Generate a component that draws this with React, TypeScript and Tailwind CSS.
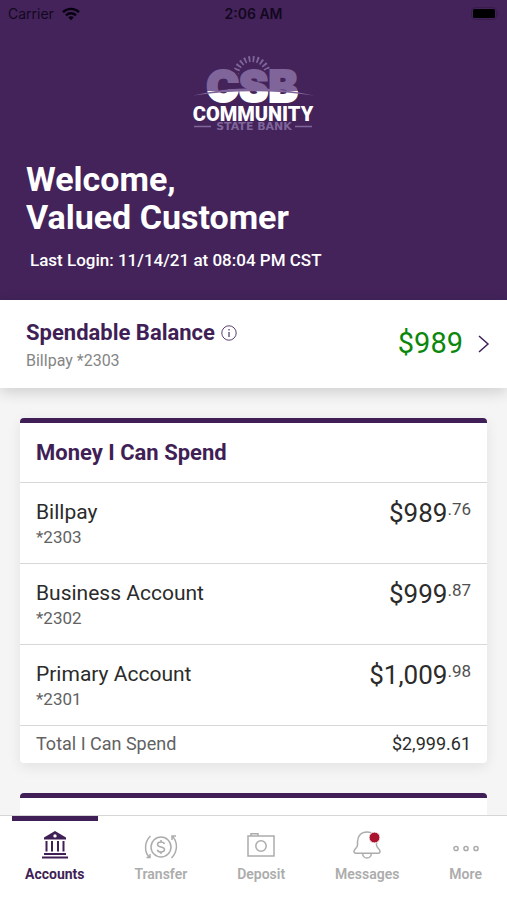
import type { ReactNode } from "react";

const accounts = [
  { name: "Billpay", number: "*2303", dollars: "$989", cents: ".76" },
  { name: "Business Account", number: "*2302", dollars: "$999", cents: ".87" },
  { name: "Primary Account", number: "*2301", dollars: "$1,009", cents: ".98" },
];

function StatusBar() {
  return (
    <div className="grid grid-cols-3 items-center h-7 px-2 font-[Inter,sans-serif] text-sm text-[#130820]">
      <div className="flex items-center gap-2">
        <span>Carrier</span>
        <svg width="18" height="14" viewBox="0 0 18 14" fill="none" stroke="#080010" strokeWidth="2.4">
          <path d="M1 5.2C5.5 .7 12.5 .7 17 5.2" />
          <path d="M4 8.3C6.8 5.6 11.2 5.6 14 8.3" />
          <path d="M9 13.2L6.2 10.3C7.8 8.9 10.2 8.9 11.8 10.3Z" fill="#080010" stroke="none" />
        </svg>
      </div>
      <span className="text-center font-semibold">2:06 AM</span>
      <svg className="justify-self-end" width="28" height="14" viewBox="0 0 28 14">
        <rect x=".5" y=".5" width="25" height="12" rx="3.5" fill="none" stroke="#391c4d" />
        <rect x="2" y="2" width="22" height="9" rx="1.5" fill="#000" />
        <path d="M26.5 5v4c1.5-.6 1.5-3.4 0-4Z" fill="#391c4d" />
      </svg>
    </div>
  );
}

function Logo() {
  return (
    <svg width="124" height="80" viewBox="0 0 124 80" role="img" aria-label="CSB Community State Bank">
      <defs>
        <linearGradient id="csb" gradientUnits="userSpaceOnUse" x1="0" y1="0" x2="0" y2="80">
          <stop offset=".49" stopColor="#80659a" />
          <stop offset=".49" stopColor="#fff" />
        </linearGradient>
        <clipPath id="sky">
          <path d="M30 0H90V17H75L70 24H48L43 17H30Z" />
        </clipPath>
      </defs>
      {/* sunburst */}
      <circle cx="60" cy="23" r="16" fill="none" stroke="#80659a" strokeWidth="6" strokeDasharray="1.8 2.4" clipPath="url(#sky)" />
      <text x="60" y="50" textAnchor="middle" fontFamily="Inter, sans-serif" fontWeight="900" fontSize="44" fill="url(#csb)" stroke="url(#csb)" strokeWidth="2">
        CSB
      </text>
      {/* horizon */}
      <path d="M1 43.5Q60 29 122 43.5Q60 35 1 43.5Z" fill="#80659a" />
      <text x="61" y="69" textAnchor="middle" fontFamily="Roboto, sans-serif" fontWeight="900" fontSize="20" fill="#fff">COMMUNITY</text>
      <path d="M2 74.5H19M103 74.5H120" stroke="#80659a" strokeWidth="1.5" />
      <text x="62" y="78" textAnchor="middle" fontFamily="DejaVu Sans, sans-serif" fontWeight="700" fontSize="11" fill="#80659a">STATE BANK</text>
    </svg>
  );
}

function BankIcon() {
  return (
    <svg width="28" height="28" viewBox="0 0 28 28" fill="#3f1f56">
      <path fillRule="evenodd" d="M14 0L25 6.5V8.5H3V6.5ZM14 3.2A1.7 1.7 0 1 0 14 6.6A1.7 1.7 0 1 0 14 3.2Z" />
      <path d="M4.5 10H6.5V20.5H4.5ZM10 10H12V20.5H10ZM16 10H18V20.5H16ZM21.5 10H23.5V20.5H21.5ZM3 22H25V24H3ZM1 25.5H27V27.5H1Z" />
    </svg>
  );
}

function TransferIcon() {
  return (
    <svg width="34" height="28" viewBox="0 0 34 28" fill="none" stroke="#acacac" strokeWidth="1.5">
      <circle cx="17" cy="16" r="10" />
      <path d="M20.5 13C20 11.5 18.7 11 17 11C15 11 13.5 11.9 13.5 13.5C13.5 17 20.5 15 20.5 18.6C20.5 20.2 19 21 17 21C15 21 13.7 20.2 13.3 18.7M17 9V11M17 21V23" />
      <path d="M6.5 5C.2 11 .2 20.5 5 26M2.5 26.5H6V23" />
      <path d="M27.5 27C33.8 21 33.8 11.5 29 6M32 5H28V9" />
    </svg>
  );
}

function CameraIcon() {
  return (
    <svg width="28" height="28" viewBox="0 0 28 28" fill="none" stroke="#acacac" strokeWidth="1.5">
      <path d="M1 5H27V25H1ZM4 5V2.8H11V5" />
      <circle cx="14" cy="15" r="5.2" />
    </svg>
  );
}

function BellIcon() {
  return (
    <svg width="28" height="28" viewBox="0 0 28 28" fill="none" stroke="#acacac" strokeWidth="1.5">
      <path d="M14 1C8 1 4.5 5 4.5 10.5V14C4.5 17 1 18 1 20.5C1 21.7 2 22.2 3 22.2H25C26 22.2 27 21.7 27 20.5C27 18 23.5 17 23.5 14V10.5C23.5 5 20 1 14 1Z" />
      <path d="M9.5 22.5C10 25.5 11.5 27 14 27C16.5 27 18 25.5 18.5 22.5" />
      <circle cx="21.5" cy="6.5" r="5.5" fill="#a9132e" stroke="#fff" strokeWidth="1" />
    </svg>
  );
}

function MoreIcon() {
  return (
    <svg width="28" height="28" viewBox="0 0 28 28" fill="none" stroke="#acacac" strokeWidth="1.5">
      <circle cx="4" cy="17.5" r="2.1" />
      <circle cx="14" cy="17.5" r="2.1" />
      <circle cx="24" cy="17.5" r="2.1" />
    </svg>
  );
}

function NavItem({ label, icon, active = false }: { label: string; icon: ReactNode; active?: boolean }) {
  return (
    <a
      href="#"
      aria-current={active ? "page" : undefined}
      className={
        active
          ? "flex flex-col items-center gap-[5px] border-t-5 border-[#3f1f56] px-[13px] pt-2.5 text-sm font-bold text-[#3f1f56]"
          : "flex flex-col items-center gap-[5px] border-t-5 border-transparent px-[13px] pt-2.5 text-sm font-semibold text-[#acacac]"
      }
    >
      {icon}
      {label}
    </a>
  );
}

export default function App() {
  return (
    <div className="flex flex-col h-screen bg-[#f5f5f5] font-[Roboto,sans-serif] text-[#2b2b2b]">
      <main className="flex-1 min-h-0 overflow-hidden">
        <header className="bg-[#43235a] h-75 text-white">
          <StatusBar />
          <div className="flex justify-center pt-6">
            <Logo />
          </div>
          <div className="px-6.5 pt-7">
            <h1 className="text-[34px] leading-[38px] font-bold">
              Welcome,
              <br />
              Valued Customer
            </h1>
            <p className="pl-1 pt-3 text-[17px] font-medium">Last Login: 11/14/21 at 08:04 PM CST</p>
          </div>
        </header>

        {/* Spendable balance */}
        <section className="flex items-center justify-between bg-white h-22 pl-6.5 pr-4 shadow-[0_4px_14px_rgba(0,0,0,0.16)]">
          <div className="pt-1.5">
            <h2 className="flex items-center gap-1.5 text-[22px] leading-7 font-bold text-[#3f1f56]">
              Spendable Balance
              <button type="button" aria-label="About spendable balance">
                <svg width="16" height="16" viewBox="0 0 16 16" fill="none" stroke="#594070">
                  <circle cx="8" cy="8" r="7.2" />
                  <path d="M8 7V12M8 4V5.5" strokeWidth="1.3" />
                </svg>
              </button>
            </h2>
            <p className="text-base leading-7 text-[#858585]">Billpay *2303</p>
          </div>
          <a href="#" className="flex items-center gap-3.5 text-[29px] text-[#0b870b]">
            $989
            <svg width="14" height="20" viewBox="0 0 14 20" fill="none" stroke="#3f1f56" strokeWidth="1.5">
              <path d="M2 2L11 10L2 18" />
            </svg>
          </a>
        </section>

        {/* Account group */}
        <section className="mx-5 mt-7.5 rounded-sm border-t-5 border-[#3f1f56] bg-white shadow-[0_4px_14px_rgba(0,0,0,0.08)]">
          <h2 className="px-4 h-[59px] pt-4 text-[22px] leading-7 font-bold text-[#3f1f56]">Money I Can Spend</h2>
          <table className="w-full border-collapse">
            <tbody>
              {accounts.map((account) => (
                <tr key={account.number} className="h-[81px] border-t border-[#d8d8d8] align-top">
                  <th scope="row" className="pl-4 pt-4 text-left font-normal">
                    <span className="block text-[21px] leading-[26px]">{account.name}</span>
                    <span className="block text-[17px] leading-6 text-[#626262]">{account.number}</span>
                  </th>
                  <td className="pr-4 pt-3 text-right text-[26px] leading-9">
                    <span className="flex justify-end items-start">
                      {account.dollars}
                      <span className="text-[17px] leading-7 text-[#505050]">{account.cents}</span>
                    </span>
                  </td>
                </tr>
              ))}
            </tbody>
            <tfoot>
              <tr className="h-[37px] border-t border-[#d8d8d8] text-[18px] leading-7">
                <th scope="row" className="pl-4 text-left font-normal text-[#626262]">Total I Can Spend</th>
                <td className="pr-4 text-right">$2,999.61</td>
              </tr>
            </tfoot>
          </table>
        </section>

        <section className="mx-5 mt-7.5 h-20 rounded-sm border-t-5 border-[#3f1f56] bg-white" />
      </main>

      <nav className="flex justify-between h-[85px] px-3 border-t border-[#d6d6d6] bg-white">
        <NavItem label="Accounts" icon={<BankIcon />} active />
        <NavItem label="Transfer" icon={<TransferIcon />} />
        <NavItem label="Deposit" icon={<CameraIcon />} />
        <NavItem label="Messages" icon={<BellIcon />} />
        <NavItem label="More" icon={<MoreIcon />} />
      </nav>
    </div>
  );
}
